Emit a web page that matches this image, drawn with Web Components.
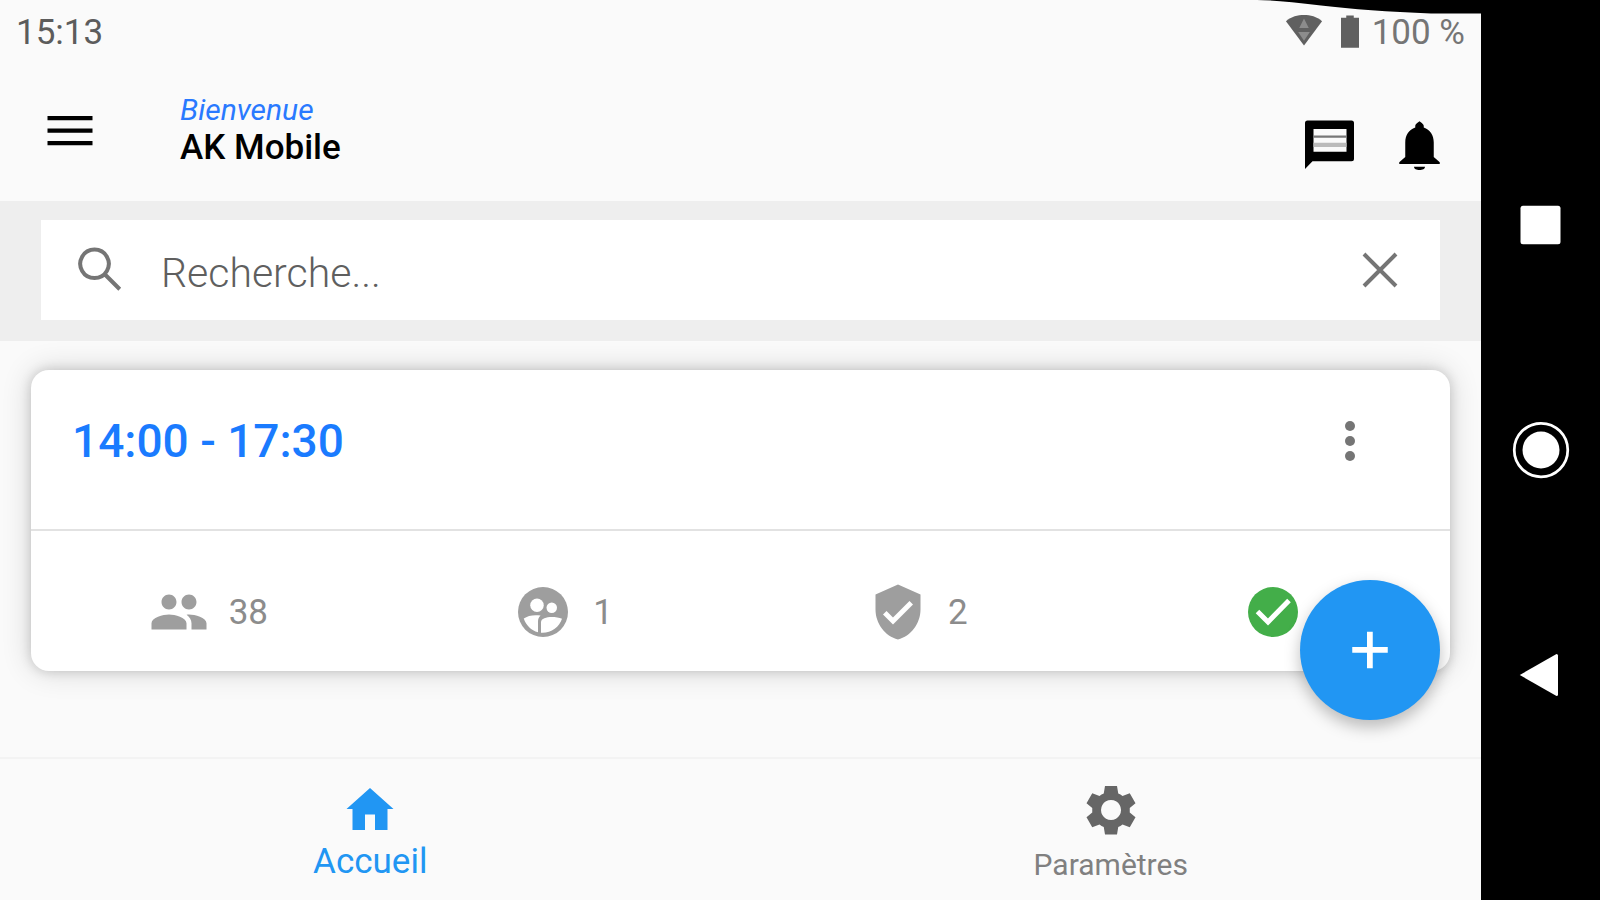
<!DOCTYPE html>
<html lang="fr">
<head>
<meta charset="utf-8">
<meta name="viewport" content="width=device-width, initial-scale=1">
<title>AK Mobile</title>
<style>
  html, body { margin: 0; height: 100%; }
  body { font-family: Roboto, "Liberation Sans", sans-serif; background: #000; color: #000; }
</style>
</head>
<body>
<ak-device>
  <ak-status-bar slot="screen" time="15:13" battery="100 %"></ak-status-bar>
  <ak-header slot="screen">
    <span slot="greeting">Bienvenue</span>
    <span slot="name">AK Mobile</span>
  </ak-header>
  <ak-search slot="screen" placeholder="Recherche..."></ak-search>
  <ak-session-card slot="content">
    <span slot="title">14:00 - 17:30</span>
    <ak-stat icon="people" label="Participants">38</ak-stat>
    <ak-stat icon="group" label="Groupes">1</ak-stat>
    <ak-stat icon="shield" label="Validations">2</ak-stat>
    <ak-stat icon="check" label="Terminé"></ak-stat>
  </ak-session-card>
  <ak-fab slot="content"></ak-fab>
  <ak-tabs slot="footer">
    <ak-tab icon="home" active>Accueil</ak-tab>
    <ak-tab icon="gear">Paramètres</ak-tab>
  </ak-tabs>
  <ak-system-nav slot="system"></ak-system-nav>
</ak-device>

<script>
const ICONS = {
  menu: '<path d="M3 6.4h18v1.700H3zM3 11.400h18v1.700H3zM3 16.400h18v1.700H3z"/>',
  chat: '<path fill-rule="evenodd" d="M3 2.200h17.600a1 1 0 0 1 1 1v14.300a1 1 0 0 1-1 1H5L2 21.600V3.200a1 1 0 0 1 1-1zM5.400 5.600v9.100h13.200V5.600z"/><path fill="#777" d="M5.400 8.200h13.200v.9H5.400z"/><path fill="#bbb" d="M5.400 11.100h13.200v1.700H5.400z"/>',
  bell: '<path d="M11.800 22c1.200 0 2.200-.4 2.200-1.300H9.600c0 .9 1 1.300 2.200 1.300zM17.500 16.800V11c0-3-1.500-5.200-4-6v-.6c0-.5-.5-1-.9-1.300L11.800 2.500 11 3.100c-.5.300-.9.800-.9 1.300V5c-2.500.8-4 3-4 6v5.800L3.700 18.900v.7h16.200v-.7z"/>',
  search: '<path fill="none" stroke="currentColor" stroke-width="1.6" d="M9.400 3.800a5.700 5.700 0 1 0 .01 0zM13.600 13.800l5.900 5.900"/>',
  close: '<path fill="none" stroke="currentColor" stroke-width="1.6" d="M5.600 5.600l12.800 12.800M18.400 5.600L5.600 18.400"/>',
  more: '<circle cx="12" cy="6" r="2"/><circle cx="12" cy="12" r="2"/><circle cx="12" cy="18" r="2"/>',
  people: '<path d="M16 11c1.660 0 2.990-1.340 2.990-3S17.660 5 16 5s-3 1.340-3 3 1.340 3 3 3zm-8 0c1.660 0 2.990-1.340 2.990-3S9.660 5 8 5 5 6.340 5 8s1.340 3 3 3zm0 2c-2.330 0-7 1.170-7 3.500V19h14v-2.500c0-2.330-4.670-3.500-7-3.500zm8 0c-.29 0-.62.02-.97.05 1.160.84 1.970 1.970 1.970 3.450V19h6v-2.500c0-2.330-4.670-3.500-7-3.500z"/>',
  group: '<circle cx="12" cy="12" r="10"/><g fill="#fff"><circle cx="9.600" cy="9.300" r="2.700"/><circle cx="15.500" cy="10.300" r="2.100"/><path d="M4.300 14.600c1.600-1.200 4.100-1.600 6.700-1.200-.8.800-1 1.500-1 2.400v4.300c-2.700-.7-4.800-2.800-5.700-5.500zM11.200 20.300v-4.200c0-1.500 2.200-2.100 4.300-2.100 1.500 0 3 .2 4.100.7-1 3.300-4.600 5.900-8.400 5.600z"/></g>',
  shield: '<path d="M12 1L3 5v6c0 5.550 3.840 10.740 9 12 5.160-1.260 9-6.450 9-12V5l-9-4zm-2 16l-4-4 1.410-1.410L10 14.170l6.590-6.590L18 9l-8 8z"/>',
  check: '<circle cx="12" cy="12" r="10"/><path fill="none" stroke="#fff" stroke-width="2" d="M5.800 11.800l4.200 4.200 8.400-8.600"/>',
  plus: '<path d="M19.100 13.100h-6v6.200h-2.300v-6.200H4.900v-2.300h5.900V4.700h2.300v6.100h6z"/>',
  home: '<path d="M10 20v-6.200h4V20h5v-8.400h2.400L12 3.200l-9.400 8.400H5V20z"/>',
  gear: '<path fill-rule="evenodd" d="M9.600 2.400h4.800l.5 3a7.500 7.500 0 0 1 1.700 1l2.900-1.100 2.300 4-2.300 1.900v1.800l2.300 1.900-2.300 4-2.900-1.100a7.500 7.500 0 0 1-1.700 1l-.5 3H9.600l-.5-3a7.500 7.500 0 0 1-1.700-1l-2.900 1.100-2.300-4L4.500 13v-1.800L2.200 9.300l2.300-4 2.900 1.100a7.500 7.500 0 0 1 1.700-1zM12 8a4 4 0 1 0 .01 0z"/>',
  wifi: '<path d="M12 20.500L.6 5.200C4 2.300 8 1.300 12 1.300s8 1 11.400 3.900z"/><path fill="#8c8c8c" d="M12 3.500l3 6H9zM8.300 12h7.400L12 17.500z"/>',
  battery: '<path d="M6 2.500h3.500V1h5v1.500H18v20H6z"/>',
  square: '<rect x="3.800" y="4.300" width="16" height="15.400" rx="1"/>',
  circle: '<circle cx="12" cy="12" r="7.400"/><circle cx="12" cy="12" r="10.700" fill="none" stroke="currentColor" stroke-width="1.100"/>',
  back: '<path d="M3.500 12L18.200 3.600q.6 0 .6.600v15.600q0 .6-.6.600z"/>'
};

/* Shared base: renders the template of the class into an open shadow root. */
class AkElement extends HTMLElement {
  connectedCallback() {
    if (this.shadowRoot) return;
    const t = document.createElement('template');
    t.innerHTML = `<style>
      button, a { color: inherit; font: inherit; text-decoration: none; }
      button { border: 0; padding: 0; margin: 0; background: none; display: grid; place-items: center; cursor: pointer; }
      ${this.constructor.styles}</style>${this.render()}`;
    this.attachShadow({ mode: 'open' }).append(t.content.cloneNode(true));
  }
}

customElements.define('ak-icon', class extends AkElement {
  static styles = `
    :host { display: block; flex: none; width: var(--icon-size, 60px); height: var(--icon-size, 60px); }
    svg { display: block; width: 100%; height: 100%; fill: currentColor; }`;
  render() { return `<svg viewBox="0 0 24 24" aria-hidden="true">${ICONS[this.getAttribute('name')]}</svg>`; }
});

customElements.define('ak-device', class extends AkElement {
  static styles = `
    :host { display: flex; min-height: 100vh; background: #000; }
    .screen { flex: 1; min-width: 0; position: relative; display: flex; flex-direction: column; background: #fafafa; }
    main { flex: 1; position: relative; padding: 29px 31px; }
    .corner { position: absolute; top: 0; right: 0; width: 224px; height: 14px; }
    slot[name=system] { display: block; width: 119px; }`;
  render() {
    return `<div class="screen">
        <slot name="screen"></slot>
        <main><slot name="content"></slot></main>
        <slot name="footer"></slot>
        <svg class="corner" viewBox="0 0 224 14" preserveAspectRatio="none" aria-hidden="true"><path d="M0 0h224v13.500h-50Q110 11 64 5.500T0 0z"/></svg>
      </div>
      <slot name="system"></slot>`;
  }
});

customElements.define('ak-status-bar', class extends AkElement {
  static styles = `
    :host { display: flex; align-items: center; height: 64px; padding: 0 16px; font-size: 35px; color: #5c5c5c; }
    .right { margin-left: auto; display: flex; align-items: center; color: #606060; }
    .wifi { --icon-size: 38px; margin-right: 9px; }
    .battery { --icon-size: 36px; margin-right: 4px; }
    .level { color: #757575; }`;
  render() {
    return `<span>${this.getAttribute('time')}</span>
      <div class="right"><ak-icon class="wifi" name="wifi"></ak-icon><ak-icon class="battery" name="battery"></ak-icon>
      <span class="level">${this.getAttribute('battery')}</span></div>`;
  }
});

customElements.define('ak-header', class extends AkElement {
  static styles = `
    :host { display: flex; align-items: flex-start; height: 137px; padding: 0 31px 0 40px; }
    .menu { margin-top: 36px; }
    .titles { margin: 28px auto 0 80px; display: flex; flex-direction: column; }
    .greeting { font-size: 30px; line-height: 36px; font-style: italic; color: #2979ff; }
    .name { font-size: 35px; line-height: 40px; font-weight: 500; }
    .actions { display: flex; gap: 30px; margin-top: 51px; }`;
  render() {
    return `<button class="menu" aria-label="Menu"><ak-icon name="menu"></ak-icon></button>
      <div class="titles"><div class="greeting"><slot name="greeting"></slot></div><div class="name"><slot name="name"></slot></div></div>
      <div class="actions">
        <button aria-label="Messages"><ak-icon name="chat"></ak-icon></button>
        <button aria-label="Notifications"><ak-icon name="bell"></ak-icon></button>
      </div>`;
  }
});

customElements.define('ak-search', class extends AkElement {
  static styles = `
    :host { display: block; padding: 19px 41px 21px; background: #eee; }
    form { display: flex; align-items: center; height: 100px; padding: 0 30px; background: #fff; color: #757575; }
    input { flex: 1; min-width: 0; height: 60px; margin: 6px 20px 0 30px; padding: 0; border: 0; outline: 0; background: none; font: 300 41px Roboto, "Liberation Sans", sans-serif; color: #333; }
    input::placeholder { color: #5f5f5f; opacity: 1; }`;
  render() {
    return `<form role="search"><ak-icon name="search"></ak-icon>
      <input type="text" aria-label="Recherche" placeholder="${this.getAttribute('placeholder')}">
      <button type="reset" aria-label="Effacer"><ak-icon name="close"></ak-icon></button></form>`;
  }
});

customElements.define('ak-session-card', class extends AkElement {
  static styles = `
    :host { display: block; border-radius: 18px; background: #fff; box-shadow: 0 0 30px rgba(0,0,0,.16), 0 0 12px rgba(0,0,0,.16); }
    header { display: flex; align-items: center; justify-content: space-between; height: 141px; padding: 0 70px 18px 41px; border-bottom: 2px solid #e2e2e2; }
    h2 { margin: 0; font-size: 46px; font-weight: 500; color: #1a7bff; }
    button { color: #757575; }
    .stats { display: flex; align-items: center; height: 118px; padding-top: 22px; }`;
  render() {
    return `<header><h2><slot name="title"></slot></h2>
      <button aria-label="Options"><ak-icon name="more"></ak-icon></button></header>
      <div class="stats"><slot></slot></div>`;
  }
});

customElements.define('ak-stat', class extends AkElement {
  static styles = `
    :host { flex: 1; display: flex; align-items: center; justify-content: center; gap: 20px; font-size: 35px; color: #8c8c8c; }
    ak-icon { color: #9e9e9e; }
    :host([icon=check]) { gap: 0; }
    :host([icon=check]) ak-icon { color: #43ae49; }`;
  render() {
    return `<ak-icon name="${this.getAttribute('icon')}" role="img" aria-label="${this.getAttribute('label')}"></ak-icon><span><slot></slot></span>`;
  }
});

customElements.define('ak-fab', class extends AkElement {
  static styles = `
    :host { position: absolute; right: 41px; bottom: 37px; }
    button { width: 140px; height: 140px; border-radius: 50%; background: #2196f3; color: #fff; box-shadow: 0 7px 16px rgba(0,0,0,.26); }`;
  render() { return `<button aria-label="Ajouter"><ak-icon name="plus"></ak-icon></button>`; }
});

customElements.define('ak-tabs', class extends AkElement {
  static styles = `
    :host { display: block; border-top: 2px solid #f3f3f3; }
    nav { display: flex; }`;
  render() { return `<nav aria-label="Navigation principale"><slot></slot></nav>`; }
});

customElements.define('ak-tab', class extends AkElement {
  static styles = `
    :host { flex: 1; color: #808080; font-size: 30px; line-height: 35px; }
    a { display: flex; flex-direction: column; align-items: center; height: 102px; padding: 21px 0 18px; }
    :host([active]) { color: #2196f3; font-size: 35px; line-height: 41px; }
    a > span { margin-top: auto; }
    ak-icon { margin-bottom: -4px; }
    :host([icon=gear]) ak-icon { color: #666; }`;
  render() {
    return `<a href="#"${this.hasAttribute('active') ? ' aria-current="page"' : ''}><ak-icon name="${this.getAttribute('icon')}"></ak-icon><span><slot></slot></span></a>`;
  }
});

customElements.define('ak-system-nav', class extends AkElement {
  static styles = `
    :host { display: flex; flex-direction: column; justify-content: center; height: 100vh; color: #fff; }
    button { height: 25%; }`;
  render() {
    return ['square:Applications récentes', 'circle:Accueil', 'back:Retour'].map(s => {
      const [icon, label] = s.split(':');
      return `<button aria-label="${label}"><ak-icon name="${icon}"></ak-icon></button>`;
    }).join('');
  }
});
</script>
</body>
</html>
